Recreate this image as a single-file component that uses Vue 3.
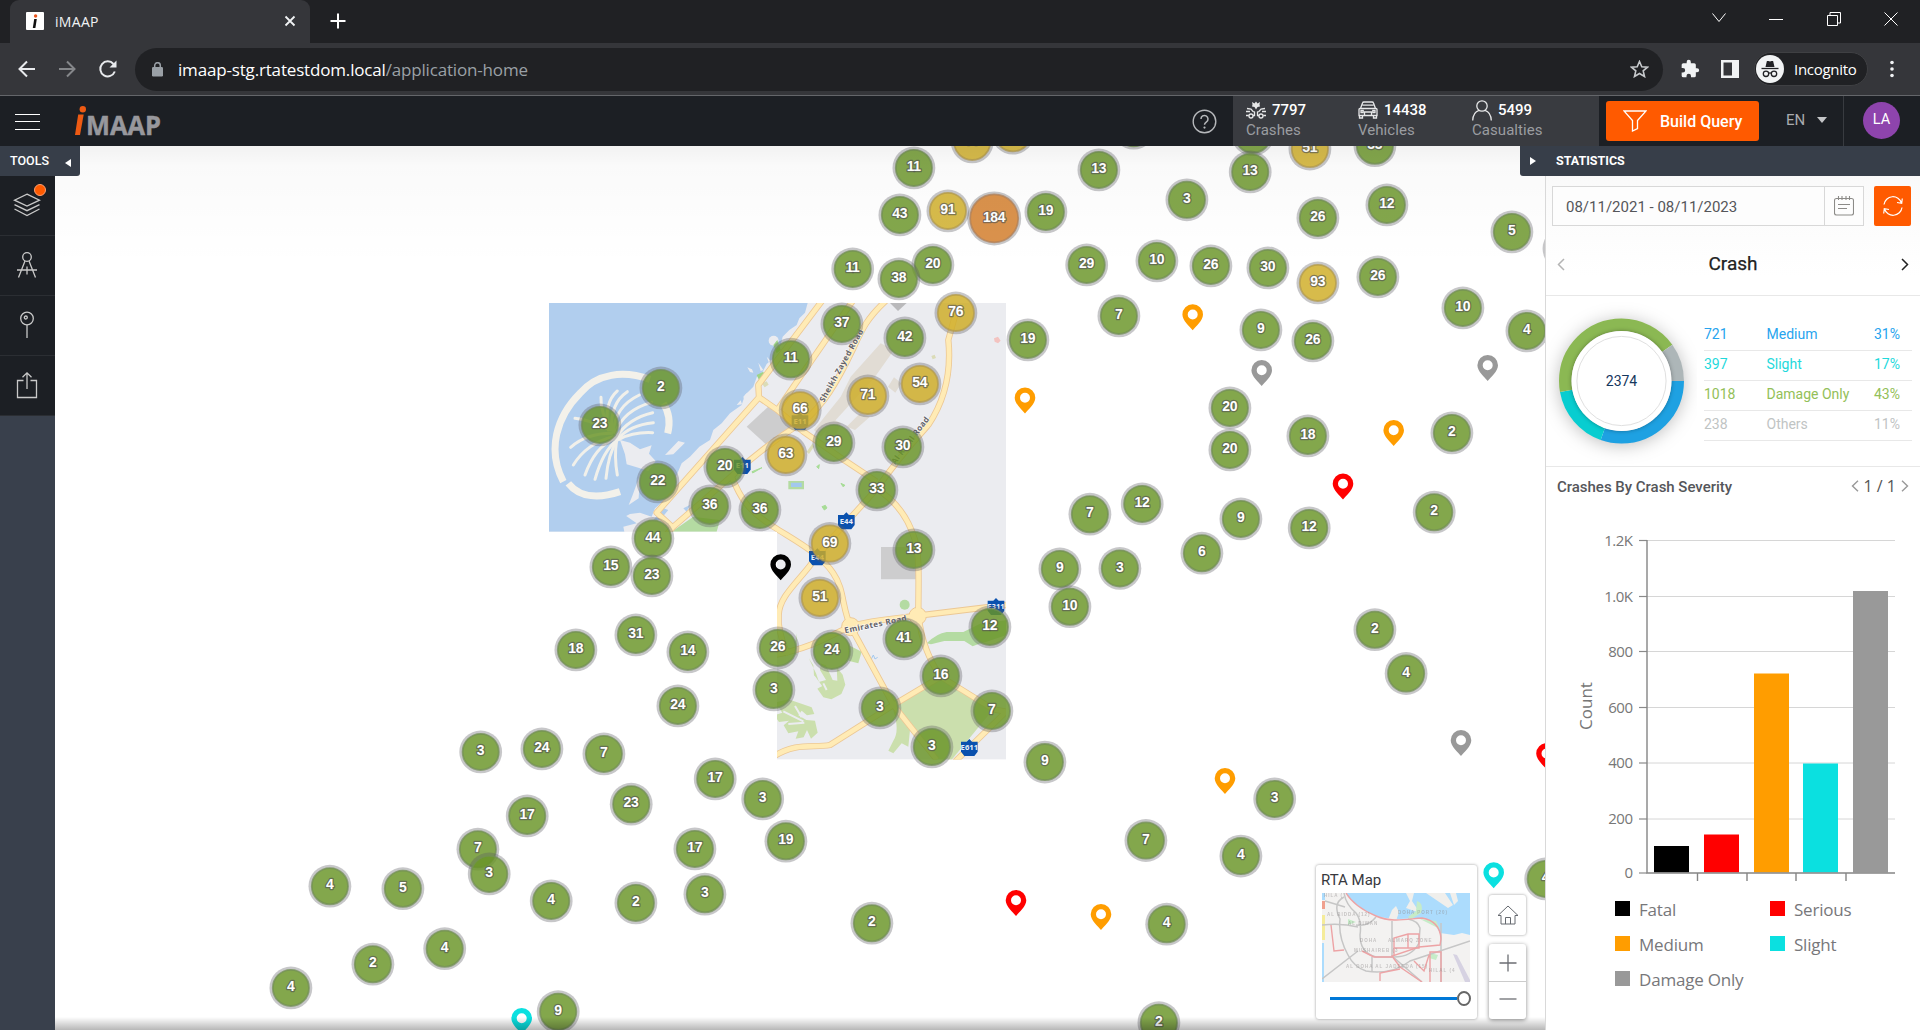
<script setup>
const stats = [
  { value: '7797', label: 'Crashes', icon: 'crash', width: 112 },
  { value: '14438', label: 'Vehicles', icon: 'car', width: 114 },
  { value: '5499', label: 'Casualties', icon: 'person', width: 100 },
]

// [x, y, count, tone]
const clusters = [
  [972, 141.7, 88, 'y'], [1012.7, 133, '', 'y'], [1133.5, 128, '', 'g'], [1252.7, 134.5, '', 'g'],
  [913.7, 167.7, 11, 'g'], [1098.7, 169.7, 13, 'g'], [1309.7, 148.8, 51, 'y'], [1374.7, 145.5, 33, 'g'],
  [1250, 171.7, 13, 'g'], [1186.7, 199.6, 3, 'g'], [899.7, 214.7, 43, 'g'], [947.7, 210.7, 91, 'y'],
  [994, 218.2, 184, 'o'], [1045.7, 211.7, 19, 'g'], [852.5, 268.7, 11, 'g'], [932.7, 264.7, 20, 'g'],
  [898.7, 278.7, 38, 'g'], [1086.5, 264.7, 29, 'g'], [1156.7, 260.7, 10, 'g'], [1210.7, 265.7, 26, 'g'],
  [1267.7, 267.7, 30, 'g'], [1317.7, 282.7, 93, 'y'], [1317.7, 217.7, 26, 'g'], [1386.7, 204.7, 12, 'g'],
  [1511.7, 231.7, 5, 'g'], [1377.7, 276.7, 26, 'g'], [1462.7, 307.7, 10, 'g'], [1526.7, 330.7, 4, 'g'],
  [1563.8, 248.5, '', 'g'], [1260.7, 329.7, 9, 'g'], [1312.7, 340.7, 26, 'g'], [1118.7, 315.7, 7, 'g'],
  [1027.7, 339.7, 19, 'g'], [955.7, 312.7, 76, 'y'], [904.7, 337.7, 42, 'g'], [841.7, 323.7, 37, 'g'],
  [919.7, 383.7, 54, 'y'], [867.7, 395.7, 71, 'y'], [790.7, 359, 11, 'g'], [660.7, 387.7, 2, 'g'],
  [599.7, 424.7, 23, 'g'], [800, 410, 66, 'y'], [785.7, 454.7, 63, 'y'], [833.7, 442.7, 29, 'g'],
  [902.7, 446.7, 30, 'g'], [724.7, 466.7, 20, 'g'], [657.7, 481.7, 22, 'g'], [709.7, 505.7, 36, 'g'],
  [759.7, 509.7, 36, 'g'], [876.7, 489.7, 33, 'g'], [652.7, 538.2, 44, 'g'], [829.7, 543.3, 69, 'y'],
  [913.7, 549.7, 13, 'g'], [610.7, 566.7, 15, 'g'], [651.7, 575.7, 23, 'g'], [819.7, 597.7, 51, 'y'],
  [635.7, 634.7, 31, 'g'], [575.7, 649.7, 18, 'g'], [687.7, 651.7, 14, 'g'], [777.7, 647.7, 26, 'g'],
  [831.7, 650.7, 24, 'g'], [903.7, 638.7, 41, 'g'], [989.7, 626.7, 12, 'g'], [940.7, 675.7, 16, 'g'],
  [773.7, 689.7, 3, 'g'], [677.7, 705.7, 24, 'g'], [879.7, 707.7, 3, 'g'], [991.7, 710.7, 7, 'g'],
  [931.7, 746.7, 3, 'g'], [603.7, 753.7, 7, 'g'], [541.7, 748.7, 24, 'g'], [715, 778.7, 17, 'g'],
  [480.5, 751.7, 3, 'g'], [527, 815.7, 17, 'g'], [631, 804, 23, 'g'], [762.5, 798.7, 3, 'g'],
  [694.7, 848.7, 17, 'g'], [785.7, 841, 19, 'g'], [477.7, 849, 7, 'g'], [489, 873.7, 3, 'g'],
  [329.7, 886, 4, 'g'], [402.7, 888.5, 5, 'g'], [551, 900.7, 4, 'g'], [635.7, 902.7, 2, 'g'],
  [704.7, 894, 3, 'g'], [871.7, 923, 2, 'g'], [372.7, 964, 2, 'g'], [444.5, 948.5, 4, 'g'],
  [290.7, 987.7, 4, 'g'], [558, 1011.5, 9, 'g'], [1229.7, 407.7, 20, 'g'], [1229.7, 449.7, 20, 'g'],
  [1307.7, 435.7, 18, 'g'], [1451.7, 432.7, 2, 'g'], [1434, 512, 2, 'g'], [1142, 503.7, 12, 'g'],
  [1089.7, 514, 7, 'g'], [1240.7, 518.7, 9, 'g'], [1309, 527.7, 12, 'g'], [1201.7, 553, 6, 'g'],
  [1059.7, 568.7, 9, 'g'], [1119.7, 568.2, 3, 'g'], [1069.7, 606.5, 10, 'g'], [1374.7, 629.5, 2, 'g'],
  [1405.9, 673.3, 4, 'g'], [1044.7, 761.9, 9, 'g'], [1274.5, 798.7, 3, 'g'], [1145.7, 840.3, 7, 'g'],
  [1240.7, 855.9, 4, 'g'], [1166.5, 924, 4, 'g'], [1158.7, 1022.5, 2, 'g'], [1545.5, 878.7, 4, 'g'],
]
const tones = {
  g: { fill: '#6b9b20', edge: '#738f55' },
  y: { fill: '#dcb61f', edge: '#b39b4e' },
  o: { fill: '#e07f20', edge: '#b08058' },
}

// [x, y of the tip, colour]
const pins = [
  [1192.7, 330.3, '#ff9d00'], [1261.7, 386, '#999'], [1487.7, 381, '#999'], [1393.7, 446, '#ff9d00'],
  [780.7, 580.3, '#000'], [1025, 413.5, '#ff9d00'], [1343, 499.5, '#f00'], [1225, 794, '#ff9d00'],
  [1461, 756, '#999'], [1546.5, 769.3, '#f00'], [1016, 916, '#f00'], [1101, 930, '#ff9d00'],
  [1493.7, 888.3, '#0be0e0'], [521.7, 1034, '#0be0e0'],
]

const shields = [
  [780, 394, 'E11'], [607, 527, 'E11'], [919, 693, 'E44'], [832, 801, 'E44'], [1368, 950, 'E311'], [1288, 1373, 'E611'],
]

const majorRoads = [
  'M848 30 L655 285 L657 322 L350 668 L398 712',
  'M657 322 L712 360 L790 425 L905 505 L1010 575',
  'M940 30 L712 360',
  'M1040 30 C980 85 965 120 940 175 C890 280 850 345 790 395 C700 450 640 500 590 545 L398 712 L340 780',
  'M1247 70 L1225 150 C1235 250 1215 330 1165 405 C1120 455 1070 510 1010 597 L880 740 L815 820 C770 880 718 920 716 975 L716 1000 Q722 1050 745 1095',
  'M575 560 C600 620 620 660 700 710 C770 755 840 790 880 850 C915 900 905 960 935 1015 L1060 1245 L1190 1409',
  'M1010 597 C1080 640 1110 700 1125 750 C1140 800 1135 880 1135 975 C1145 1060 1170 1110 1200 1160',
  'M705 1095 C830 1070 880 1030 930 1010 C1010 985 1090 985 1150 975 L1398 945',
  'M700 1400 C770 1355 820 1375 870 1365 L1060 1245 L1202 1160 L1360 1258 L1398 1265',
  'M1240 1420 L1398 1265',
]

const palmFronds = [
  'M232 450 Q190 480 165 568', 'M232 450 Q205 490 198 565', 'M230 450 Q222 500 232 555', 'M225 445 Q165 470 135 555',
  'M220 440 Q140 460 100 525', 'M215 430 Q140 430 92 472', 'M210 420 Q150 390 105 385', 'M215 415 Q180 370 183 322',
  'M205 420 Q190 340 232 303', 'M215 420 Q210 340 262 305', 'M220 425 Q225 350 298 315', 'M225 430 Q250 360 335 337',
  'M230 440 Q265 385 338 368', 'M235 445 Q270 405 340 398', 'M237 448 Q280 425 338 428',
]

const severity = [
  { count: '721', name: 'Medium', share: '31%', color: '#27a4ee' },
  { count: '397', name: 'Slight', share: '17%', color: '#1fd9dc' },
  { count: '1018', name: 'Damage Only', share: '43%', color: '#93c058' },
  { count: '238', name: 'Others', share: '11%', color: '#bfc4c4' },
]

const R = 56.2
const C = 2 * Math.PI * R
const slices = (() => {
  let at = 0
  return [[721, '#1ea1e2'], [397, '#08cdd0'], [1018, '#8bb853'], [238, '#adb6b8']].map(([n, color]) => {
    const part = (n / 2374) * C
    const s = { color, dash: `${part} ${C - part}`, offset: -at }
    at += part
    return s
  })
})()

const yTicks = [
  { y: 20.5, text: '1.2K' }, { y: 76.5, text: '1.0K' }, { y: 131.5, text: '800' }, { y: 187.5, text: '600' },
  { y: 243, text: '400' }, { y: 299, text: '200' }, { y: 353, text: '0' },
]
const bars = [
  { x: 108, top: 326, color: '#000' },
  { x: 158, top: 314.5, color: '#f00' },
  { x: 208, top: 153.5, color: '#ff9d00' },
  { x: 257, top: 243.5, color: '#0be0e0' },
  { x: 307, top: 71, color: '#999' },
]
const legend = [
  ['Fatal', '#000'], ['Serious', '#f00'], ['Medium', '#ff9d00'], ['Slight', '#0be0e0'], ['Damage Only', '#999'],
]
</script>

<template>
  <div class="window">
    <div class="tabstrip">
      <div class="tab">
        <svg class="favicon" width="18" height="18" viewBox="0 0 18 18">
          <rect width="18" height="18" rx="1" fill="#fff" />
          <circle cx="9.6" cy="4" r="1.7" fill="#e8541c" />
          <path d="M8.2 7h2.6l-1.4 9H6.8z" fill="#111" />
        </svg>
        <span class="tab-title">iMAAP</span>
        <svg width="12" height="12" viewBox="0 0 12 12"><path d="M1.5 1.5l9 9M10.5 1.5l-9 9" stroke="#f1f3f4" stroke-width="1.8" /></svg>
      </div>
      <svg class="newtab" width="16" height="16" viewBox="0 0 16 16"><path d="M8 .5v15M.5 8h15" stroke="#fff" stroke-width="2" /></svg>
      <div class="winctl">
        <svg width="14" height="14" viewBox="0 0 14 14"><path d="M.5 1.500l6.500 8L13.500 1.500" /></svg>
        <svg width="14" height="14" viewBox="0 0 14 14"><path d="M0 7.500h14" /></svg>
        <svg width="14" height="14" viewBox="0 0 14 14"><path d="M.5 3.500h10v10h-10zM3 3V.5h10.500v10.500H11" /></svg>
        <svg width="14" height="14" viewBox="0 0 14 14"><path d="M.5.5l13 13M13.500.5l-13 13" /></svg>
      </div>
    </div>

    <div class="toolbar">
      <svg width="18" height="18" viewBox="0 0 18 18" class="nav"><path d="M17 9H2M9 1.500L1.500 9 9 16.500" /></svg>
      <svg width="18" height="18" viewBox="0 0 18 18" class="nav dim"><path d="M1 9h15M9 1.500L16.500 9 9 16.500" /></svg>
      <svg width="20" height="20" viewBox="0 0 20 20" class="nav"><path d="M16.800 12.500A7.500 7.500 0 1 1 15.500 5" /><path d="M18.500 1.500v7h-7z" fill="#e8eaed" stroke="none" /></svg>
      <div class="omnibox">
        <svg width="11" height="15" viewBox="0 0 11 15"><rect y="5" width="11" height="9.500" rx="1.200" fill="#9aa0a6" /><path d="M2.700 6V3.500a2.800 2.800 0 0 1 5.600 0V6" fill="none" stroke="#9aa0a6" stroke-width="1.500" /></svg>
        <span class="url"><b>imaap-stg.rtatestdom.local</b>/application-home</span>
        <svg class="star" width="19" height="18" viewBox="0 0 19 18"><path d="M9.500 1.500l2.300 5.200 5.700.5-4.300 3.700 1.300 5.600-5-3-5 3 1.300-5.600L1.500 7.200l5.700-.5z" fill="none" stroke="#c7cacd" stroke-width="1.600" /></svg>
      </div>
      <svg class="puzzle" width="20" height="20" viewBox="0 0 24 24"><path fill="#f1f3f4" d="M20.500 11H19V7a2 2 0 0 0-2-2h-4V3.500a2.500 2.500 0 0 0-5 0V5H4a2 2 0 0 0-2 2v3.800h1.500a2.700 2.700 0 0 1 0 5.400H2V20a2 2 0 0 0 2 2h3.800v-1.500a2.700 2.700 0 0 1 5.400 0V22H17a2 2 0 0 0 2-2v-4h1.500a2.500 2.500 0 0 0 0-5z" /></svg>
      <svg class="side" width="18" height="18" viewBox="0 0 18 18"><path d="M0 0h18v18H0zM2.500 2.500v13h8.500v-13z" fill="#f1f3f4" fill-rule="evenodd" /></svg>
      <div class="incognito">
        <svg width="28" height="28" viewBox="0 0 28 28">
          <circle cx="14" cy="14" r="14" fill="#f1f3f4" />
          <path d="M9.500 12l1.400-6h1.600l1.500.6 1.500-.6h1.600l1.400 6z" fill="#202124" />
          <path d="M5.500 13.500h17" stroke="#202124" stroke-width="1.300" />
          <g fill="none" stroke="#202124" stroke-width="1.300"><circle cx="10" cy="18.800" r="2.700" /><circle cx="18" cy="18.800" r="2.700" /><path d="M12.700 18.300q1.300-.8 2.600 0" /></g>
        </svg>
        <span>Incognito</span>
      </div>
      <svg class="dots" width="4" height="18" viewBox="0 0 4 18" fill="#f1f3f4"><circle cx="2" cy="2.500" r="1.800" /><circle cx="2" cy="9" r="1.800" /><circle cx="2" cy="15.500" r="1.800" /></svg>
    </div>

    <header class="appbar">
      <svg class="burger" width="25" height="17" viewBox="0 0 25 17"><path d="M0 1.500h25M0 8.500h25M0 16.500h25" stroke="#fff" stroke-width="1" /></svg>
      <svg class="logo" width="87" height="30" viewBox="0 0 87 30">
        <circle cx="7.800" cy="3.200" r="3.200" fill="#ee5a13" />
        <path d="M3.200 8.500h5.500L5 29H0z" fill="#ee5a13" />
        <text x="11" y="28.500" textLength="75" lengthAdjust="spacingAndGlyphs">MAAP</text>
      </svg>
      <svg class="help" width="25" height="25" viewBox="0 0 25 25"><circle cx="12.500" cy="12.500" r="11.300" fill="none" stroke="#b6b8bb" stroke-width="1.400" /><path d="M9 10a3.500 3.500 0 1 1 5.500 2.800c-1.500 1-2 1.600-2 3" fill="none" stroke="#b6b8bb" stroke-width="1.500" /><circle cx="12.500" cy="18.600" r="1.100" fill="#b6b8bb" /></svg>
      <div class="stats">
        <div v-for="s in stats" :key="s.label" class="stat" :style="{ width: s.width + 'px' }">
          <div class="stat-top">
            <svg v-if="s.icon === 'crash'" width="20" height="18" viewBox="0 0 20 18" class="ic">
              <path d="M1 7.500l4 .5 2 2.500 1.500.5v3.500H7M0 10.500h4M0 14.500h2.800M19 7.500l-4 .5-2 2.500-1.500.5v3.500H13M20 10.500h-4M20 14.500h-2.800" /><circle cx="5" cy="15" r="2" /><circle cx="15" cy="15" r="2" /><path d="M10 8.500L8.500 6 6 5.500l.5-2L6 1l2.500 1.500L10 .5l1.500 2L14 1l-.5 2.500.5 2-2.500.5z" fill="#e6e7e8" stroke="none" />
            </svg>
            <svg v-else-if="s.icon === 'car'" width="20" height="18" viewBox="0 0 20 18" class="ic">
              <path d="M2.500 7.500L4.500 2q.3-1 1.500-1h8q1.200 0 1.500 1l2 5.500M4.500 4.200h11M1 8.500q0-1 1-1h16q1 0 1 1v6H1zM1.500 14.500V17h3v-2.500M15.500 14.500V17h3v-2.500M6.500 14v-3h7v3" /><path d="M3 9.500h2.200v2H3zM14.800 9.500H17v2h-2.200z" />
            </svg>
            <svg v-else width="20" height="21" viewBox="0 0 20 21" class="ic person"><circle cx="10" cy="6" r="5.200" /><path d="M.7 20.500C1 14.500 4 11.200 7 10.300M13 10.300c3 .9 6 4.200 6.300 10.200" /></svg>
            <b>{{ s.value }}</b>
          </div>
          <div class="stat-label">{{ s.label }}</div>
        </div>
      </div>
      <button class="build">
        <svg width="24" height="22" viewBox="0 0 24 22"><path d="M1 1h22l-8.500 9.500v8L9.500 21V10.500z" fill="none" stroke="#fff" stroke-width="1.300" /></svg>
        <span>Build Query</span>
      </button>
      <div class="lang"><span>EN</span><i></i></div>
      <div class="user"><span>LA</span></div>
    </header>

    <main class="body">
      <aside class="tools">
        <div class="tools-tab"><span>TOOLS</span><i></i></div>
        <div class="tool">
          <svg width="28" height="26" viewBox="0 0 28 26"><path d="M14 2.200l12.500 6L14 14 1.500 8.200zM1.500 12.600L14 18.700l12.500-6.100M1.500 17L14 23.500 26.500 17" /></svg>
          <em></em>
        </div>
        <div class="tool"><svg width="22" height="28" viewBox="0 0 22 28"><circle cx="11" cy="6" r="4.300" /><path d="M9 10L2.500 26.500M13 10l6.500 16.500M1 19h20M11 15.500v8" /></svg></div>
        <div class="tool"><svg width="16" height="28" viewBox="0 0 16 28"><circle cx="8" cy="7.500" r="6.300" /><circle cx="6.800" cy="6.500" r="1.500" /><path d="M8 14v13" /></svg></div>
        <div class="tool"><svg width="22" height="28" viewBox="0 0 22 28"><path d="M7.500 9.500H1.500v17h19v-17h-6M11 18V2M6.500 6.300L11 1.800l4.500 4.500" /></svg></div>
      </aside>

      <section class="map">
        <svg class="canvas" width="1490" height="884" viewBox="55 146 1490 884">
          <defs>
            <clipPath id="tiles"><path d="M27 39H1398V1409H711V725H27z" /></clipPath>
          </defs>
          <g transform="translate(540 290) scale(.33333)" clip-path="url(#tiles)">
            <rect x="27" y="39" width="1371" height="1370" fill="#ebecf0" />
            <path d="M27 39H803L795 68 778 85 770 105 748 120 728 140 722 165 705 180 700 205 680 222 668 245 650 262 640 290 615 315 605 345 570 370 545 400 520 420 510 450 478 470 450 500 425 520 408 560 412 600 375 630 345 655 335 680 300 668 270 672 235 690 200 695 235 675 250 672 290 700 250 710 253 725H27z" fill="#b1ceee" />
            <circle cx="701" cy="152" r="15" fill="#ebecf0" />
            <path d="M622 232l14 6 4 10-10-2zM655 218l15 22-8 3zM680 200l12 12-6 4zM610 320l10-10 14-8-2 18-10 20-8-4zM590 345l12-14 4 12z" fill="#ebecf0" />
            <g fill="none" stroke="#f3f1ea" stroke-width="21">
              <path d="M330 268C250 240 170 250 120 310C50 380 20 480 70 575" />
              <path d="M85 580C120 625 180 625 240 605" />
              <path d="M370 340Q396 380 383 430" />
            </g>
            <path d="M240 450l30 8 30 20 35-12-8 25 20 22-22 30-30-10-35-10-5-30zM300 555l-22 60-12 30 30-20zM375 495l40-42 20 5-35 35z" fill="#ebecf0" />
            <path v-for="d in palmFronds" :key="d" :d="d" fill="none" stroke="#f1f0ea" stroke-width="9" stroke-linecap="round" />
            <path d="M460 680L540 690 530 725H395z" fill="#b4dba2" />
            <path d="M650 255l20-10 5 15-18 10zM700 165l12-15 10 30-12 10z" fill="#9ed488" />
            <path d="M340 690l30-35 15 5-25 30zM430 655l20-10-10 20z" fill="#b1ceee" />
            <path d="M745 573h47v25h-47z" fill="#b4dba2" /><path d="M753 578h32v13h-32z" fill="#a3c8ee" />
            <path d="M636 545l30-12-28 16zM830 530l8-6-2 12zM903 580l12 6-6 4zM846 650l10-4 5 8-8 6z" fill="#a7dc97" stroke="#a7dc97" stroke-width="3" />
            <path d="M620 410l70-65 75 55-82 68z" fill="#cdcdce" />
            <path d="M1050 39h50l-26 24z" fill="#b9b9bb" />
            <path d="M1022 160l40 20-60 85-110 120-50 55-20-20 80-100 30-60zM865 380l38 20-25 60-25-10zM960 370l30 10-45 40-25-10zM1062 262l22 18-18 28-22-18z" fill="#e1dcd4" />
            <path d="M1023 771h112v97h-112z" fill="#cdcdce" />
            <circle cx="1094" cy="944" r="15" fill="#b4dba2" />
            <path d="M1160 1060q30-30 60-34l50 0 50-25 78-10v45l-60 20-20 5-20 8-25-16-60 0-40 10z" fill="#b4dba2" />
            <path d="M1062 1245L1202 1160 1360 1258 1235 1409H1190z" fill="#cbdfad" />
            <path d="M1060 1262q20 60 0 90l-15 30 15 8 25-30 20 10 5-50-25-40z" fill="#cbdfad" />
            <path d="M925 1065l40 20-10 35-30-8zM770 1030l-8 60 8 5z" fill="#c0dda3" />
            <g fill="#cbdfad">
              <path d="M806 1104l14 22 2 30 14 20 22-6-18-30 2-20 16 6 20 44 14 2-2-40 18 22 8 30-12 28-30 16-24-6-18-26 10-6-14-40z" />
              <path d="M745 1228l70 24 8 20-22 4-16-14-10 14 24 14 26 2 8 36-20 18-12-26-10 22-24 4 8-22-30 6-14-24 16-14-30 4-14-20 24-8-10-14-30 12v-24z" />
            </g>
            <path d="M730 1264l60 30M745 1302l48-4M765 1248l20 34M822 1160l22 30M850 1180l10 20" stroke="#ebecf0" stroke-width="6" fill="none" />
            <path d="M985 1125l15-30 5 12 8-5" fill="none" stroke="#a3c8ee" stroke-width="3" />
            <path d="M1362 145l12-5 8 12-8 8-10-5z" fill="#f3c3c0" />
            <path d="M1174 198l10-4 4 10-10 4zM665 280l15-6 6 10-12 8zM800 485l18-25 4 10-15 22z" fill="#dbdcb8" />
            <g fill="none" stroke-linejoin="round">
              <path v-for="d in majorRoads" :key="d" :d="d" stroke="#ecc895" stroke-width="19" />
              <g fill="#ffebb5" stroke="#ecc895" stroke-width="3"><circle cx="932" cy="1010" r="27" /><circle cx="1133" cy="978" r="26" /></g>
              <path v-for="d in majorRoads" :key="d + 'f'" :d="d" stroke="#ffebb5" stroke-width="14" />
            </g>
            <g class="road-name">
              <text transform="translate(852 338) rotate(-61)" textLength="245">Sheikh Zayed Road</text>
              <text transform="translate(1066 524) rotate(-53)" textLength="170">Al Khail Road</text>
              <text transform="translate(915 1030) rotate(-11.500)" textLength="190">Emirates Road</text>
            </g>
            <g v-for="([x, y, t], i) in shields" :key="i">
              <path :d="`M${x - 25} ${y - 18}h17l8-8 8 8h17v30l-10 13h-30l-10-13z`" fill="#0a51ae" />
              <text class="shield" :x="x" :y="y + 8">{{ t }}</text>
            </g>
          </g>

          <g v-for="([x, y, n, t], i) in clusters" :key="'c' + i">
            <circle :cx="x + 0.2" :cy="y + 0.2" :r="t === 'o' ? 27 : 21.4" fill="#5c5c60" fill-opacity=".34" />
            <circle :cx="x + 0.2" :cy="y + 0.2" :r="t === 'o' ? 24 : 18.1" :fill="tones[t].fill" fill-opacity=".74" :stroke="tones[t].edge" stroke-opacity=".75" stroke-width="1.8" />
            <text v-if="n" class="count" :x="x" :y="y + 3.3">{{ n }}</text>
          </g>

          <path v-for="([x, y, c], i) in pins" :key="'p' + i" :transform="`translate(${x} ${y})`" :fill="c" fill-rule="evenodd" d="M0 0C-3-4-10.300-9.500-10.300-15.800a10.300 10.300 0 0 1 20.600 0C10.300-9.500 3-4 0 0zM0-20.800a5 5 0 1 0 0 10 5 5 0 0 0 0-10z" />
        </svg>

        <div class="shade top"></div>
        <div class="shade bottom"></div>

        <div class="widgets">
          <div class="basemap">
            <span>RTA Map</span>
            <svg width="148" height="89" viewBox="0 0 148 89">
              <rect width="148" height="89" fill="#f3f2f1" />
              <path d="M24 0C30 10 42 18 54 23C70 27 80 26 100 25Q112 27 118 40L132 42 140 40 148 42V0z" fill="#acdcfd" />
              <path d="M66 27l4-10 4-4 3 6-3 9zM84 0l4 8-4 7 14 5-8-12 2-8zM104 0l22 15 5-3-8-12zM128 0h6l2 8-4 4z" fill="#f0efec" />
              <path d="M95 8q7 2 4 12l-10 6-3-2 8-6zM98 26l16 2 4 8-10-5zM26 26l8 3-8 3zM108 60l8 2-2 5-7-2z" fill="#c6ecc8" />
              <path d="M131 61l4 1 13 25v2h-5z" fill="#d6d2e2" />
              <path d="M0 22h3v25H0z" fill="#f5ec9a" /><path d="M0 8h3v8H0z" fill="#f0a08e" /><path d="M0 0h3v7H0zM0 50h2v39H0z" fill="#acdcfd" />
              <g fill="none" stroke="#c6c6c6" stroke-width="1.500">
                <path d="M22 0Q24 12 34 20Q40 28 38 42Q38 60 54 64H72Q90 64 97 50L98 35Q96 28 86 26" />
                <path d="M22 4Q10 10 18 26Q16 44 26 62Q32 74 44 78Q70 82 88 68L148 48" />
                <path d="M0 32q20-2 36 2M70 28v35l30 26M36 58L0 86M50 64v14M54 24q-8 10-20 8M119 30v59M3 8l20 6" />
              </g>
              <g fill="none" stroke="#eda3a5" stroke-width="1.400">
                <path d="M24 0C30 10 42 18 54 23C70 30 85 26 100 25Q118 28 119 46L118 52 97 54 70 63 78 74 100 89" />
                <path d="M72 63v-18l14-4h11v14H72M86 41v14M9 32l3 26 10-1M40 58l12 6h18M58 88v-8l20-4M108 89l0-30h11v30M92 68l10 10 5-16" />
              </g>
              <g class="place">
                <text x="2" y="4">HILA (</text><text x="5" y="23">AL BIDDA (12)</text><text x="26" y="32">AL DIWAN</text><text x="76" y="21">DOHA PORT (20)</text>
                <text x="38" y="49">DOHA</text><text x="66" y="49">ALMARQ ZONE</text><text x="32" y="59">MUSHAIREB (3</text><text x="24" y="75">AL DOHA AL JADEEDA (15)</text>
                <text x="107" y="79">HILAL (4</text>
              </g>
            </svg>
            <div class="slider"><i></i><b></b></div>
          </div>
          <div class="mapbtns">
            <div class="mbtn home"><svg width="22" height="20" viewBox="0 0 22 20"><path d="M1 10.500L11 1l10 9.500h-3V19H4v-8.500zM8.500 19v-6.500h5V19" fill="none" stroke="#666a70" stroke-width="1" /></svg></div>
            <div class="zoom">
              <div class="mbtn"><svg width="18" height="18" viewBox="0 0 18 18"><path d="M9 .5v17M.5 9h17" stroke="#6c6e73" stroke-width="1.300" /></svg></div>
              <div class="mbtn minus"><svg width="18" height="18" viewBox="0 0 18 18"><path d="M.5 9h17" stroke="#6c6e73" stroke-width="1.300" /></svg></div>
            </div>
          </div>
        </div>
      </section>

      <aside class="panel">
        <div class="panel-tab"><i></i><span>STATISTICS</span></div>
        <div class="filter">
          <div class="date">
            <span>08/11/2021 - 08/11/2023</span>
            <div class="cal"><svg width="20" height="20" viewBox="0 0 20 20"><path d="M2.500 2.500h15q2 0 2 2V17q0 2-2 2h-15q-2 0-2-2V4.500q0-2 2-2zM4.500 0v4M8 0v4M12 0v4M15.500 0v4M4 8.500h12M4 12.500h9" fill="none" stroke="#8c8b88" stroke-width="1.100" /></svg></div>
          </div>
          <div class="refresh"><svg width="20" height="20" viewBox="0 0 20 20" fill="none" stroke="#fff" stroke-width="1.200"><path d="M1 8.500A9 9 0 0 1 18.500 7M19 11.500A9 9 0 0 1 1.500 13M19.300 2.500L18.700 7.300 14 6.500M.7 17.500l.6-4.800 4.700.8" /></svg></div>
        </div>
        <div class="pager">
          <svg width="8" height="13" viewBox="0 0 8 13"><path d="M7 1L1.500 6.500 7 12" stroke="#b4b4b4" /></svg>
          <span>Crash</span>
          <svg width="8" height="13" viewBox="0 0 8 13"><path d="M1 1l5.500 5.500L1 12" stroke="#222" /></svg>
        </div>
        <div class="summary">
          <svg class="donut" width="151" height="170" viewBox="0 0 151 170">
            <g transform="translate(75.500 85)">
              <circle r="62" fill="#fff" class="halo" />
              <g fill="none">
                <circle v-for="s in slices" :key="s.color" :r="R" :stroke="s.color" stroke-width="12.600" :stroke-dasharray="s.dash" :stroke-dashoffset="s.offset" />
              </g>
              <circle r="50" fill="#fff" class="hub" />
              <circle r="44.600" fill="none" stroke="#e0e0e0" />
              <text y="5.300">2374</text>
            </g>
          </svg>
          <div class="rows">
            <div v-for="r in severity" :key="r.name" class="row" :style="{ color: r.color }">
              <span>{{ r.count }}</span><span>{{ r.name }}</span><span>{{ r.share }}</span>
            </div>
          </div>
        </div>
        <div class="chart-head">
          <b>Crashes By Crash Severity</b>
          <div class="pages">
            <svg width="8" height="12" viewBox="0 0 8 12"><path d="M7 .8L1.500 6 7 11.200" stroke="#999" /></svg>
            <span>1 / 1</span>
            <svg width="8" height="12" viewBox="0 0 8 12"><path d="M1 .8L6.500 6 1 11.200" stroke="#999" /></svg>
          </div>
        </div>
        <svg class="chart" width="374" height="366" viewBox="0 0 374 366">
          <g v-for="t in yTicks" :key="t.text">
            <path v-if="t.text !== '0'" :d="`M101 ${t.y}H349`" stroke="#d6d6d6" />
            <path :d="`M93 ${t.y}H101`" stroke="#8a8a8a" stroke-width="1.200" />
            <text x="86.500" :y="t.y + 5" class="tick">{{ t.text }}</text>
          </g>
          <rect v-for="b in bars" :key="b.color" :x="b.x" :y="b.top" width="35" :height="352.5 - b.top" :fill="b.color" />
          <path d="M101 20V353H349M151.500 353v8M201 353v8M250 353v8M300 353v8" fill="none" stroke="#858585" stroke-width="1.400" />
          <text class="axis" transform="translate(45.500 186) rotate(-90)">Count</text>
        </svg>
        <div class="legend">
          <div v-for="[name, color] in legend" :key="name"><i :style="{ background: color }"></i>{{ name }}</div>
        </div>
      </aside>
    </main>
  </div>
</template>

<style>
body { margin: 0; overflow: hidden; }
</style>

<style scoped>
* { box-sizing: border-box; }
.window { width: 1920px; height: 1030px; display: flex; flex-direction: column; overflow: hidden; background: #fff; font-family: Roboto, sans-serif; }

.tabstrip { height: 43px; background: #202124; display: flex; align-items: center; padding-bottom: 1px; }
.tab { width: 300px; height: 43px; margin: 1px 0 0 10px; padding: 0 14px 1px 16px; background: #35363a; border-radius: 9px 9px 0 0; display: flex; align-items: center; }
.tab-title { flex: 1; margin-left: 11px; font: 14px "Open Sans", sans-serif; color: #f1f3f4; letter-spacing: .3px; }
.newtab { margin-left: 20px; }
.winctl { margin-left: auto; margin-right: 22px; display: flex; gap: 43.5px; margin-top: -5px; }
.winctl path { fill: none; stroke: #fff; stroke-width: 1; }

.toolbar { height: 53px; background: #35363a; border-bottom: 1px solid #64666a; display: flex; align-items: center; padding-left: 18px; }
.nav { fill: none; stroke: #e8eaed; stroke-width: 2; margin-right: 22px; }
.nav.dim { stroke: #85878a; }
.omnibox { width: 1528px; height: 43px; margin-left: -5px; border-radius: 22px; background: #202124; display: flex; align-items: center; padding: 0 14px 0 17px; }
.url { flex: 1; margin-left: 15px; font: 17px "Open Sans", sans-serif; letter-spacing: -.17px; color: #9aa0a6; }
.url b { font-weight: 400; color: #fff; }
.puzzle { margin-left: 17px; }
.side { margin-left: 21px; }
.incognito { height: 34px; width: 114px; margin-left: 15px; padding-left: 1px; border-radius: 17px; border: 1px solid #3f4043; background: #202124; display: flex; align-items: center; gap: 10px; color: #fff; font: 15px "Open Sans", sans-serif; letter-spacing: -.3px; }
.dots { margin-left: 22px; }

.appbar { height: 50px; background: #1c1f24; display: flex; align-items: center; flex: none; }
.burger { margin-left: 15px; margin-top: 1px; }
.logo { margin-left: 35px; overflow: visible; margin-top: -1px; }
.logo text { font: 700 27.5px "Open Sans", sans-serif; fill: #98989d; stroke: #98989d; stroke-width: .5px; }
.help { margin-left: auto; margin-right: 16px; }
.stats { width: 366px; height: 50px; background: #393b40; padding-left: 13px; display: flex; }
.stat-top { height: 25px; padding-top: 3px; display: flex; align-items: center; gap: 6px; color: #fff; font-size: 15px; }
.stat-top b { font-weight: 500; }
.stat-label { font-size: 15px; line-height: 19px; color: #9b9da0; letter-spacing: .05px; }
.ic { fill: none; stroke: #e6e7e8; stroke-width: 1.3; }
.build { width: 153px; height: 40px; margin-left: 7px; border: 0; border-radius: 3px; background: #ff5a00; color: #fff; font: 500 16px Roboto, sans-serif; display: flex; align-items: center; padding: 0 0 0 17px; gap: 13px; white-space: nowrap; }
.lang { width: 84px; height: 50px; padding: 0 0 2px 27px; display: flex; align-items: center; gap: 12px; font-size: 15px; color: #a9abae; }
.lang i { border: 5px solid transparent; border-top-color: #c5c6c8; border-bottom: 0; border-top-width: 6px; }
.user { width: 77px; height: 50px; border-left: 1px solid #383b40; display: flex; align-items: center; justify-content: center; padding: 0 1px 1px 0; }
.user span { width: 37px; height: 37px; border-radius: 50%; background: #8e44ad; color: #fff; font-size: 14.5px; line-height: 36px; text-align: center; }

.body { flex: 1; display: flex; min-height: 0; }
.tools { width: 55px; background: #39404c; position: relative; z-index: 3; }
.tools-tab { width: 80px; height: 30px; background: #373e49; border-radius: 0 0 3px 0; display: flex; align-items: center; padding: 0 0 2px 10px; color: #fff; font-size: 12.5px; font-weight: 500; }
.tools-tab i { margin: 6px 0 0 16px; border: 4.5px solid transparent; border-right: 6px solid #fff; border-left: 0; }
.tool { height: 60px; background: #1c1f24; border-bottom: 1px solid #2b2e33; display: flex; align-items: center; justify-content: center; position: relative; padding: 0 1px 2px 0; }
.tool svg { fill: none; stroke: #c9c9c9; stroke-width: 1.3; }
.tool em { position: absolute; left: 34px; top: 8px; width: 12px; height: 12px; border-radius: 50%; background: #ff5a00; border: 1px solid #ffa070; }

.map { width: 1490px; position: relative; background: #fff; overflow: hidden; }
.canvas { display: block; }
.count { font: 700 14px "Liberation Sans", sans-serif; letter-spacing: -.4px; text-anchor: middle; fill: #fff; stroke: #555a; stroke-width: 2.5px; paint-order: stroke; stroke-linejoin: round; }
.road-name { font: 700 24px "Noto Sans", sans-serif; fill: #63636b; stroke: #ffffffb0; stroke-width: 4px; paint-order: stroke; }
.shield { font: 700 23px "Noto Sans", sans-serif; fill: #e8eef8; text-anchor: middle; }
.shade { position: absolute; left: 0; right: 0; pointer-events: none; }
.shade.top { top: 0; height: 120px; background: linear-gradient(#0000000d, #00000005 20px, #0000); }
.shade.bottom { bottom: 0; height: 13px; background: linear-gradient(#0000, #00000048); }
.widgets { position: absolute; right: 19px; bottom: 11px; display: flex; align-items: flex-end; gap: 12.5px; }
.basemap { width: 161px; height: 154px; background: #fff; border-radius: 3px; box-shadow: 0 0 3px #0006; padding: 5px 0 0 6.5px; color: #37383d; font-size: 15px; line-height: 20px; }
.basemap span { display: block; height: 23px; margin-left: -1px; }
.basemap svg { display: block; }
.place { font: 700 4.5px "Liberation Sans", sans-serif; letter-spacing: 1px; fill: #8c8888; opacity: .45; }
.slider { height: 14px; width: 141px; margin: 9px 0 0 8px; display: flex; align-items: center; }
.slider i { width: 127px; height: 3px; background: #0078d7; }
.slider b { width: 14px; height: 15px; border-radius: 50%; border: 2px solid #666; background: #fff; }
.mapbtns { display: flex; flex-direction: column; gap: 9px; }
.mbtn { width: 37px; height: 37px; display: flex; align-items: center; justify-content: center; }
.minus { height: 38px; padding-bottom: 3px; }
.home { height: 40px; background: #fff; border-radius: 3px; box-shadow: 0 0 3px #0006; }
.zoom { background: #fff; border-radius: 3px; box-shadow: 0 1px 4px #0007; }
.zoom .minus { border-top: 1px solid #ccc; }

.panel { width: 375px; border-left: 1px solid #d9d9d9; background: linear-gradient(#f8f8f8, #fff 130px); display: flex; flex-direction: column; position: relative; z-index: 2; }
.panel-tab { width: 400px; height: 30px; margin-left: -26px; background: #373e49; border-radius: 0 0 0 3px; display: flex; align-items: center; padding: 0 0 1px 10px; color: #fff; font-size: 12.5px; font-weight: 700; flex: none; }
.panel-tab i { border: 4.5px solid transparent; border-left: 6.5px solid #fff; border-right: 0; margin-right: 20px; }
.panel-tab span { margin-top: -1px; }
.filter { display: flex; gap: 10px; padding: 10px 0 0 6px; height: 50px; }
.date { width: 312px; height: 40px; border: 1px solid #d8d8d8; display: flex; align-items: center; background: #fdfdfd; font-size: 15px; color: #55565a; padding-left: 13px; }
.date span { flex: 1; padding-top: 1px; }
.cal { width: 39px; height: 38px; border-left: 1px solid #d8d8d8; display: flex; align-items: center; justify-content: center; }
.refresh { width: 37px; height: 40px; border-radius: 2px; background: #ff5a00; display: flex; align-items: center; justify-content: center; }
.pager { height: 70px; border-bottom: 1px solid #e8e8e8; display: flex; align-items: center; justify-content: space-between; padding: 8px 11px 0; color: #222; }
.pager span { font-size: 19px; margin-top: -2px; -webkit-text-stroke: .25px #222; }
.pager path { fill: none; stroke-width: 1.5; }
.summary { height: 171px; border-bottom: 1px solid #e8e8e8; display: flex; background: #fff; }
.donut text { font-size: 14px; fill: #16375e; text-anchor: middle; }
.halo { filter: drop-shadow(0 2px 9px #0004); }
.hub { filter: drop-shadow(0 0 2px #0005); }
.rows { margin: 25px 0 0 7px; width: 208px; }
.row { height: 30px; border-bottom: 1px solid #e8e8e8; display: grid; grid-template-columns: 62.5px 1fr 25px; align-items: center; font-size: 14px; padding: 0 13px 3px 0; }
.row span:last-child { text-align: right; }
.chart-head { height: 53px; padding: 8px 11px 0 11px; display: flex; justify-content: space-between; background: #fff; }
.chart-head b { font-size: 15px; font-weight: 500; color: #55565a; line-height: 24px; letter-spacing: -.02px; }
.pages { display: flex; align-items: center; height: 22px; gap: 5px; font: 16px "Open Sans", sans-serif; color: #555; }
.pages path { fill: none; stroke-width: 1.4; }
.chart { flex: none; }
.tick { font: 15px "Open Sans", sans-serif; letter-spacing: -.5px; fill: #777; text-anchor: end; }
.axis { font: 17px "Open Sans", sans-serif; fill: #777; text-anchor: middle; }
.legend { display: grid; grid-template-columns: 155px 155px; grid-auto-rows: 35px; margin: 10px 0 0 69px; font: 17px "Open Sans", sans-serif; color: #77777a; }
.legend div { display: flex; align-items: center; height: 26px; letter-spacing: -.2px; }
.legend i { width: 15px; height: 15px; margin: -2px 9px 0 0; }
</style>
